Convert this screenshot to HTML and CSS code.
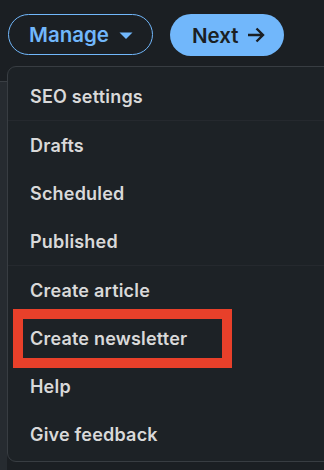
FILE: index.html
```html
<!DOCTYPE html>
<html>
<head>
<meta charset="utf-8">
<link rel="stylesheet" href="styles.css">
</head>
<body>
<div class="page">
  <div class="actions">
    <button class="btn btn-manage">Manage
      <svg class="caret" width="14" height="8" viewBox="0 0 14 8"><path d="M0.5 0.5 L13.5 0.5 L7 7 Z" fill="#71b7fb"/></svg>
    </button>
    <button class="btn btn-next">Next
      <svg class="arrow" width="18" height="16" viewBox="0 0 18 16"><path d="M1 8 H16 M9.5 1.5 L16 8 L9.5 14.5" fill="none" stroke="#1b1f23" stroke-width="2.4" stroke-linejoin="miter"/></svg>
    </button>
  </div>
  <div class="backdrop"></div>
  <div class="menu">
    <ul class="group">
      <li class="item">SEO settings</li>
    </ul>
    <ul class="group">
      <li class="item">Drafts</li>
      <li class="item">Scheduled</li>
      <li class="item">Published</li>
    </ul>
    <ul class="group">
      <li class="item">Create article</li>
      <li class="item highlighted">Create newsletter<span class="mark"></span></li>
      <li class="item">Help</li>
      <li class="item">Give feedback</li>
    </ul>
  </div>
</div>
</body>
</html>
```
FILE: styles.css
```css
* { box-sizing: border-box; }
html, body {
  margin: 0;
  padding: 0;
  background: #1b1f23;
  width: 324px;
  height: 470px;
  overflow: hidden;
  font-family: Inter, "Liberation Sans", sans-serif;
}
.page {
  position: relative;
  height: 470px;
}
.actions {
  display: flex;
  gap: 17px;
  padding: 14px 0 0 8px;
}
.btn {
  display: flex;
  align-items: center;
  font-family: Inter, "Liberation Sans", sans-serif;
  font-size: 20.5px;
  font-weight: 600;
  border-radius: 21px;
  height: 41px;
  cursor: pointer;
}
.btn-manage {
  width: 145px;
  border: 1px solid #71b7fb;
  background: transparent;
  color: #71b7fb;
  padding: 0 0 0 20px;
  gap: 10px;
}
.btn-next {
  width: 114px;
  height: 42px;
  border: none;
  background: #71b7fb;
  color: #1b1f23;
  padding: 0 0 0 22px;
  gap: 8px;
}
.caret { margin-top: 2px; }
.backdrop {
  margin-top: 25px;
  height: 400px;
  border-top: 1px solid #3a3f44;
  width: 7px;
  background: #262b30;
}
.menu {
  position: absolute;
  left: 7px;
  top: 66px;
  width: 330px;
  height: 396px;
  background: #1d2226;
  border: 1px solid #383d42;
  border-radius: 9px;
  padding-top: 5px;
}
.group {
  list-style: none;
  margin: 0;
  padding: 0;
  border-bottom: 1px solid #25292e;
}
.group:last-child { border-bottom: none; }
.item {
  position: relative;
  height: 48px;
  display: flex;
  align-items: center;
  padding-left: 22px;
  font-size: 18px;
  letter-spacing: 0.2px;
  font-weight: 600;
  color: #d9d9d9;
}
.mark {
  position: absolute;
  left: 5px;
  top: -5px;
  width: 219px;
  height: 59px;
  border: 10px solid #e8402a;
}
```
